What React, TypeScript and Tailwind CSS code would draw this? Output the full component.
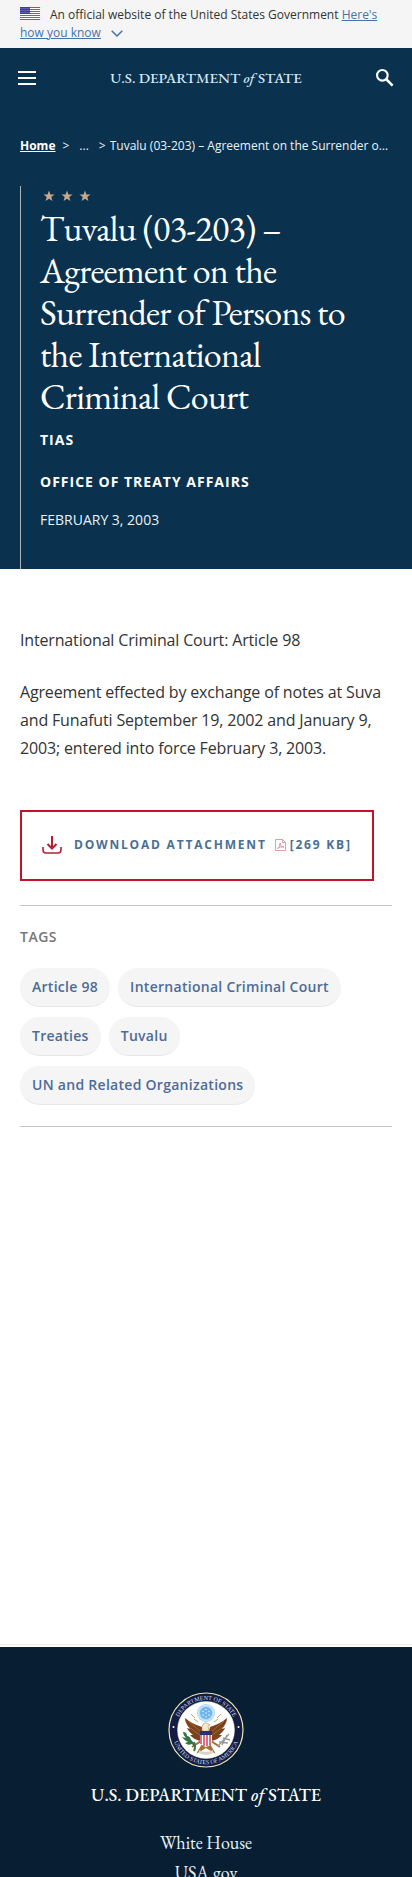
import React from "react";

const tags = ["Article 98", "International Criminal Court", "Treaties", "Tuvalu", "UN and Related Organizations"];
const footerLinks = ["White House", "USA.gov"];
const serif = "font-['EB_Garamond','Liberation_Serif',serif]";

function Flag() {
  return (
    <svg viewBox="0 0 20 13" className="mr-[10px] inline-block h-[13px] w-5 align-[-1px]" aria-hidden="true">
      <rect width="20" height="13" fill="#fff" />
      {[0, 2, 4, 6, 8, 10, 12].map((y) => (
        <rect key={y} y={y} width="20" height="1" fill="#dc3c48" />
      ))}
      <rect width="10" height="7" fill="#3b3fa0" />
      {[1, 3, 5].map((y) =>
        [1, 3, 5, 7, 9].map((x) => <circle key={`${x}-${y}`} cx={x} cy={y + 0.5} r="0.4" fill="#c9cdf0" />)
      )}
    </svg>
  );
}

function Star() {
  return (
    <svg viewBox="0 0 12 12" className="size-3" fill="#c9a988" aria-hidden="true">
      <path d="M6 .6 7.4 4.4 11.5 4.6 8.3 7.1 9.4 11 6 8.8 2.6 11 3.7 7.1 .5 4.6 4.6 4.4Z" />
    </svg>
  );
}

function Seal() {
  return (
    <svg viewBox="0 0 76 76" className="size-[76px]" role="img" aria-label="Department of State seal">
      <defs>
        <path id="sealTop" d="M8 38A30 30 0 0 1 68 38" />
        <path id="sealBottom" d="M3.800 38A34.200 34.200 0 0 0 72.200 38" />
      </defs>
      <circle cx="38" cy="38" r="37" fill="#141c44" stroke="#e9e6b4" strokeWidth="1.200" />
      <circle cx="38" cy="38" r="28.500" fill="#fff" stroke="#e9e6b4" strokeWidth=".5" />
      <g fill="#d5dcec" fontSize="6" fontFamily="Liberation Serif, serif" textAnchor="middle">
        <text>
          <textPath href="#sealTop" startOffset="50%">DEPARTMENT OF STATE</textPath>
        </text>
        <text>
          <textPath href="#sealBottom" startOffset="50%">UNITED STATES OF AMERICA</textPath>
        </text>
      </g>
      <circle cx="5.500" cy="35" r="1" fill="#fff" />
      <circle cx="70.500" cy="35" r="1" fill="#fff" />
      <circle cx="38" cy="21" r="9" fill="#a9d8f8" />
      <circle cx="38" cy="21" r="7.600" fill="none" stroke="#e3f3fd" strokeWidth=".7" />
      <circle cx="38" cy="21" r="6" fill="#6fb4ea" />
      <g fill="#e6f5ff">
        <circle cx="38" cy="17.500" r=".8" />
        <circle cx="35" cy="19.500" r=".8" />
        <circle cx="41" cy="19.500" r=".8" />
        <circle cx="38" cy="21" r=".8" />
        <circle cx="35" cy="23" r=".8" />
        <circle cx="41" cy="23" r=".8" />
        <circle cx="38" cy="24.700" r=".8" />
      </g>
      <path d="M27 26l-4-4M30 30l-4-3M49 26l4-4M46 30l4-3" stroke="#c9a45f" strokeWidth="1" />
      <path d="M17 26Q24 32 34 35L36 43 33 49Q26 48 22 43L25 43Q20 39 19 36L22 37Q17 31 17 26Z" fill="#7b421c" />
      <path d="M59 26Q52 32 42 35L40 43 43 49Q50 48 54 43L51 43Q56 39 57 36L54 37Q59 31 59 26Z" fill="#7b421c" />
      <path d="M20 29 33 40M21 35 33 44M56 29 43 40M55 35 43 44" stroke="#b27a45" strokeWidth=".7" />
      <path d="M34 35q1-5 5-4l3 2-2 1 1 5h-7z" fill="#f4e9d3" stroke="#a97b42" strokeWidth=".5" />
      <path d="M33 49 24 55M43 49 52 55M35 52l-4 7 7-4 7 4-4-7" fill="#a66e34" stroke="#a66e34" strokeWidth="2" />
      <path d="M32 39h12v10q0 4-6 6-6-2-6-6z" fill="#fff" />
      <path d="M33 43v9M36 43v11M39 43v11M42 43v10" stroke="#cf3550" strokeWidth="1.400" />
      <path d="M32 39h12v4H32z" fill="#26336d" />
      <path d="M15 40q4 0 4 4 3 0 4 4 3 2 4 7-2-1-3-3-4 2-7-1l3-1q-4-2-6-5l4 1q-3-3-3-6z" fill="#327443" />
      <path d="M26 50q2 5 0 9" fill="none" stroke="#327443" strokeWidth="2" />
      <path d="M50 54 61 42M51 50l9 1M55 46l7 2M54 53l5-10" stroke="#9a9999" strokeWidth="1.400" />
      <path d="M31 58q7 4 14 0v3q-7 4-14 0z" fill="#d9d3ca" />
    </svg>
  );
}

export default function App() {
  return (
    <div className="bg-white font-['Open_Sans',sans-serif] text-[#333]">
      <div className="bg-[#f5f5f5] px-5 py-1.5 text-xs leading-[18px]">
        <Flag />
        An official website of the United States Government{" "}
        <a href="#how-you-know" className="text-[#4773aa] underline">
          Here's how you know
        </a>
        <svg viewBox="0 0 12 7" className="ml-[10px] inline-block h-[7px] w-3" fill="none" stroke="#4773aa" strokeWidth="1.500" aria-hidden="true">
          <path d="m.7.7 5.300 5.300L11.300.7" />
        </svg>
      </div>

      <header className="flex h-15 items-center justify-between bg-[#0a314d] px-4 text-white">
        <button type="button" aria-label="Menu" className="p-0.5">
          <svg viewBox="0 0 18 14" className="h-[14px] w-[18px]" fill="currentColor">
            <path d="M0 0h18v2H0zM0 6h18v2H0zM0 12h18v2H0z" />
          </svg>
        </button>
        <a href="#home" className={`${serif} text-[15px] font-medium text-[#d5e8f8]`}>
          U.S. DEPARTMENT <i>of</i> STATE
        </a>
        <button type="button" aria-label="Search" className="p-0.5">
          <svg viewBox="1 1 17 17" className="size-[18px]" fill="none" stroke="currentColor" strokeWidth="2">
            <circle cx="7" cy="7" r="5" />
            <path d="m10.700 10.700 6 6" strokeWidth="2.400" />
          </svg>
        </button>
      </header>

      <section className="bg-[#0a314d] px-5 pt-7 text-white">
        <nav aria-label="Breadcrumb" className="mb-[31px] flex text-xs leading-[19px] text-[#e8f3fb]">
          <a href="#home" className="font-bold text-white underline">Home</a>
          <span className="ml-[7px]">&gt;</span>
          <span className="ml-[10px]">...</span>
          <span className="mr-1 ml-[10px]">&gt;</span>
          <span className="min-w-0 flex-1 truncate pr-0.5">Tuvalu (03-203) – Agreement on the Surrender of Persons to the International Criminal Court</span>
        </nav>
        <div className="border-l border-[#a9b5b9] pr-5 pb-[38px] pl-[19px]">
          <div className="flex gap-1.5 pt-1 pb-1.5 pl-[3px]">
            <Star />
            <Star />
            <Star />
          </div>
          <h1 className={`${serif} text-4xl leading-[42px] tracking-[-0.02em]`}>
            Tuvalu (03-203) – Agreement on the Surrender of Persons to the International Criminal Court
          </h1>
          <p className="mt-[11px] text-sm leading-[22px] font-bold tracking-[1px]">TIAS</p>
          <p className="mt-5 text-sm leading-[22px] font-bold tracking-[1px]">OFFICE OF TREATY AFFAIRS</p>
          <p className="mt-4 text-sm leading-[22px] text-[#e8f3fb]">FEBRUARY 3, 2003</p>
        </div>
      </section>

      <main className="border-b border-[#eee] px-5 pt-[57px] pb-[517px]">
        <p className="text-base leading-7 tracking-[-0.01em]">International Criminal Court: Article 98</p>
        <p className="mt-6 text-base leading-7 tracking-[-0.01em]">
          Agreement effected by exchange of notes at Suva and Funafuti September 19, 2002 and January 9, 2003; entered into force February 3, 2003.
        </p>
        <a href="#download" className="mt-12 flex h-[71px] w-fit items-center border-2 border-[#bf1429] px-5 pb-0.5 text-xs font-bold tracking-[0.15em] whitespace-nowrap text-[#4a6f95]">
          <svg viewBox="0 0 20 18" className="mr-3 h-[18px] w-5 shrink-0" fill="none" stroke="#b81c32" strokeWidth="2" aria-hidden="true">
            <path d="M10 0v12M5.500 8 10 12.500 14.500 8" />
            <path d="M1 11v2.500Q1 17 4 17h12q3 0 3-3.500V11" strokeWidth="1.600" />
          </svg>
          DOWNLOAD ATTACHMENT
          <svg viewBox="0 0 11 12" className="mr-1 ml-2 h-3 w-[11px] shrink-0" fill="none" stroke="#d88791" strokeWidth=".8" aria-hidden="true">
            <path d="M.5.5h7l3 3v8H.5zM7.500.5v3h3M2.500 9.500Q5 8 5 4q0 4 4 4-4-.5-6.500 1.500z" />
          </svg>
          [269 KB]
        </a>
        <section className="mt-6 border-y border-[#c6c6c6] pt-5 pb-[21px]">
          <h2 className="text-sm leading-[22px] font-semibold tracking-[0.5px] text-[#777]">TAGS</h2>
          <ul className="mt-5 flex flex-wrap gap-x-2 gap-y-[10px]">
            {tags.map((tag) => (
              <li key={tag}>
                <a href="#tags" className="block rounded-[20px] border-b border-[#e8e8e8] bg-[#f5f5f5] px-3 py-[9px] text-sm leading-5 font-semibold tracking-[0.02em] text-[#4d6b99]">
                  {tag}
                </a>
              </li>
            ))}
          </ul>
        </section>
      </main>

      <footer className={`${serif} mt-0.5 flex flex-col items-center bg-[#081f33] pt-[45px] text-white`}>
        <Seal />
        <p className="mt-[15px] text-lg leading-6 font-medium">
          U.S. DEPARTMENT <i>of</i> STATE
        </p>
        <ul className="mt-[21px] text-center text-lg leading-[30px] text-[#e8f3fb]">
          {footerLinks.map((link) => (
            <li key={link}>
              <a href="#footer">{link}</a>
            </li>
          ))}
        </ul>
      </footer>
    </div>
  );
}
